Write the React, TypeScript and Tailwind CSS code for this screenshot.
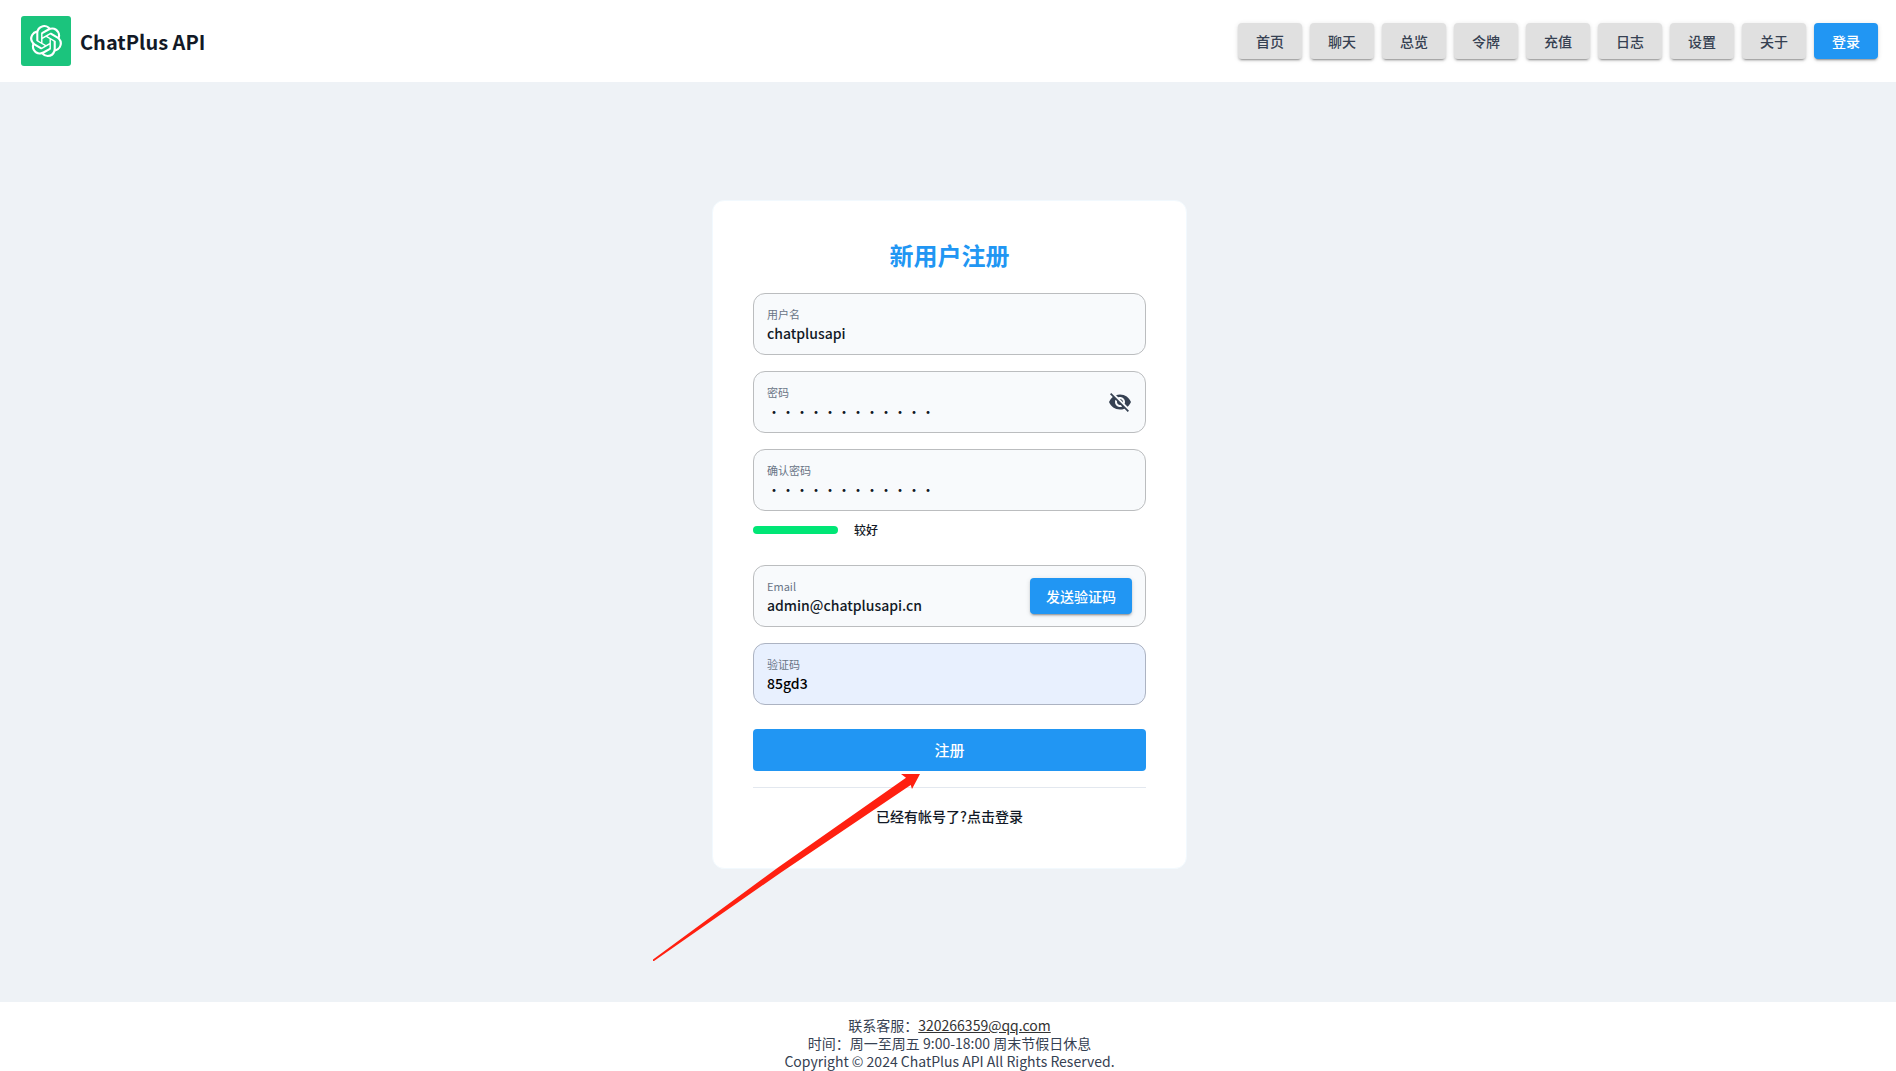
import { useId, type ReactNode } from "react";
import { MdVisibilityOff } from "react-icons/md";
import { SiOpenai } from "react-icons/si";

const navItems = ["首页", "聊天", "总览", "令牌", "充值", "日志", "设置", "关于"];

const raised =
  "shadow-[0_3px_1px_-2px_rgba(0,0,0,0.2),0_2px_2px_0_rgba(0,0,0,0.14),0_1px_5px_0_rgba(0,0,0,0.12)]";

type FieldProps = {
  label: string;
  value: string;
  type?: "text" | "password";
  filled?: boolean;
  children?: ReactNode;
};

function Field({ label, value, type = "text", filled = false, children }: FieldProps) {
  const id = useId();
  return (
    <div
      className={`flex h-[62px] items-center rounded-xl border px-[13px] ${
        filled ? "border-[#acb3c2] bg-[#e8f0fe]" : "border-[#bbbdbf] bg-[#f8fafc]"
      }`}
    >
      <div className="min-w-0 flex-1 pt-px">
        <label htmlFor={id} className="mb-px block text-[11px] leading-4 text-[#697586]">
          {label}
        </label>
        <input
          id={id}
          type={type}
          defaultValue={value}
          className={`block w-full bg-transparent text-sm leading-5 outline-none ${
            type === "password" ? "font-normal" : "font-medium"
          } ${filled ? "text-black" : "text-[#121926]"}`}
        />
      </div>
      {children}
    </div>
  );
}

function Arrow() {
  return (
    <svg
      className="pointer-events-none absolute top-[572px] -left-[60px]"
      width="270"
      height="190"
      viewBox="0 0 270 190"
      fill="#ff2010"
      aria-hidden="true"
    >
      <path d="M0 186.5 L125 94.5 L253 4.7 L248 1 L267 1 L259 16 L257.7 12 L128 99.5 L1 188 L0 188 Z" />
    </svg>
  );
}

export default function App() {
  return (
    <div className="flex min-h-screen flex-col bg-[#eef2f6] font-['Noto_Sans_CJK_SC',sans-serif] text-[#121926]">
      <header className="flex h-[82px] items-center justify-between bg-white pr-[18px] pl-[21px]">
        <a href="#" className="flex items-center gap-[9px]">
          <span className="flex size-[50px] items-center justify-center rounded-[3px] bg-[#1bc47d] text-white">
            <SiOpenai size={32} />
          </span>
          <span className="pt-0.5 text-xl leading-8 font-bold">ChatPlus API</span>
        </a>
        <nav className="flex gap-2">
          {navItems.map((item) => (
            <button
              key={item}
              className={`h-9 w-16 rounded bg-[#e0e0e0] text-sm font-medium text-[#364152] ${raised}`}
            >
              {item}
            </button>
          ))}
          <button className={`h-9 w-16 rounded bg-[#2196f3] text-sm font-medium text-white ${raised}`}>
            登录
          </button>
        </nav>
      </header>

      <main className="flex flex-1 flex-col items-center pt-[118px] pl-[3px]">
        <section className="relative w-full max-w-[475px] rounded-xl border border-[#f2f9fe] bg-white px-10 pt-9 pb-10">
          <h1 className="text-center text-2xl leading-9 font-bold text-[#2196f3]">新用户注册</h1>
          <form className="mt-5 flex flex-col" onSubmit={(e) => e.preventDefault()}>
            <div className="flex flex-col gap-4">
              <Field label="用户名" value="chatplusapi" />
              <Field label="密码" value="abcdefgh1234" type="password">
                <button type="button" aria-label="显示密码" className="text-[#364152]">
                  <MdVisibilityOff size={24} />
                </button>
              </Field>
              <Field label="确认密码" value="abcdefgh1234" type="password" />
            </div>
            <div className="mt-[9px] mb-[25px] flex h-5 items-center gap-4">
              <div className="h-2 w-[85px] rounded bg-[#00e676]" />
              <span className="text-xs font-medium">较好</span>
            </div>
            <div className="flex flex-col gap-4">
              <Field label="Email" value="admin@chatplusapi.cn">
                <button
                  type="button"
                  className={`h-9 w-[102px] rounded bg-[#2196f3] text-sm font-medium text-white ${raised}`}
                >
                  发送验证码
                </button>
              </Field>
              <Field label="验证码" value="85gd3" filled />
            </div>
            <button type="submit" className="mt-6 h-[42px] rounded bg-[#2196f3] text-[15px] font-medium text-white">
              注册
            </button>
          </form>
          <hr className="mt-4 border-[#e3e8ef]" />
          <p className="mt-4 text-center text-sm leading-6 font-medium">
            <a href="#">已经有帐号了?点击登录</a>
          </p>
          <Arrow />
        </section>
      </main>

      <footer className="bg-white pt-[14px] pb-px pl-[3px] text-center text-sm leading-[18px] text-[#364152]">
        <p>
          联系客服：
          <a href="mailto:320266359@qq.com" className="text-[#333333] underline">
            320266359@qq.com
          </a>
        </p>
        <p>时间：周一至周五 9:00-18:00 周末节假日休息</p>
        <p>Copyright © 2024 ChatPlus API All Rights Reserved.</p>
      </footer>
    </div>
  );
}
